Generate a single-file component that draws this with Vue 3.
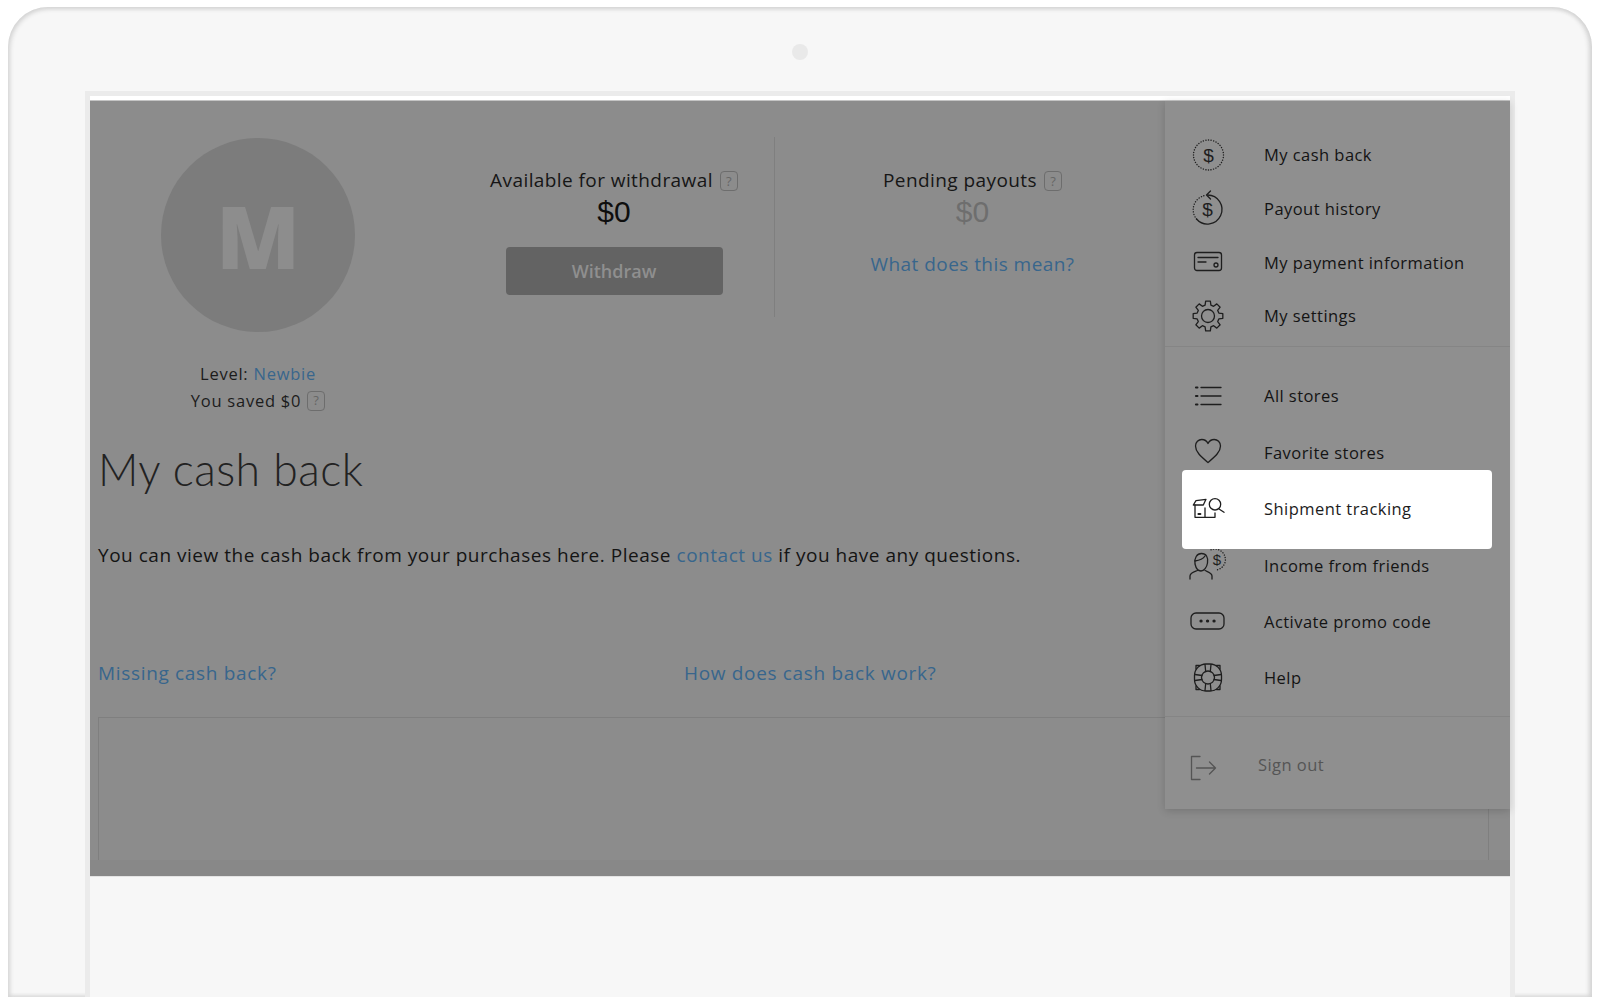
<script setup>
const stats = [
  { label: 'Available for withdrawal', value: '$0', muted: false },
  { label: 'Pending payouts', value: '$0', muted: true },
]
const topItems = [
  { id: 'cash', text: 'My cash back' },
  { id: 'history', text: 'Payout history' },
  { id: 'card', text: 'My payment information' },
  { id: 'gear', text: 'My settings' },
]
const midItems = [
  { id: 'list', text: 'All stores' },
  { id: 'heart', text: 'Favorite stores' },
  { id: 'ship', text: 'Shipment tracking', active: true },
  { id: 'friends', text: 'Income from friends' },
  { id: 'promo', text: 'Activate promo code' },
  { id: 'help', text: 'Help' },
]
function gearPath() {
  const pt = (r, deg) => {
    const a = (deg * Math.PI) / 180
    return `${(16 + r * Math.cos(a)).toFixed(2)} ${(16 + r * Math.sin(a)).toFixed(2)}`
  }
  let d = ''
  for (let i = 0; i < 8; i++) {
    const c = i * 45 - 90
    d += `${i ? 'L' : 'M'}${pt(11.2, c - 15)} L${pt(15, c - 9)} L${pt(15, c + 9)} L${pt(11.2, c + 15)} `
  }
  return d + 'Z'
}
const gear = gearPath()
</script>

<template>
  <div class="page">
    <div class="laptop">
      <div class="camera"></div>
      <div class="frame">
        <div class="strip"></div>
        <div class="app">
          <div class="content">
            <div class="head">
              <div class="profile">
                <div class="avatar">M</div>
                <div class="level">Level: <a>Newbie</a></div>
                <div class="saved">You saved $0 <span class="q">?</span></div>
              </div>
              <div class="stats">
                <div class="stat left">
                  <div class="label">{{ stats[0].label }} <span class="q">?</span></div>
                  <div class="value">{{ stats[0].value }}</div>
                  <button class="btn">Withdraw</button>
                </div>
                <div class="stat right">
                  <div class="label">{{ stats[1].label }} <span class="q">?</span></div>
                  <div class="value muted">{{ stats[1].value }}</div>
                  <a class="mean">What does this mean?</a>
                </div>
              </div>
            </div>
            <h1>My cash back</h1>
            <p class="intro">You can view the cash back from your purchases here. Please <a>contact us</a> if you have any questions.</p>
            <div class="links">
              <a>Missing cash back?</a>
              <a>How does cash back work?</a>
            </div>
            <div class="table"></div>
          </div>

          <aside class="menu">
            <div class="group first">
              <div v-for="item in topItems" :key="item.id" class="row small">
                <svg class="icon" viewBox="0 0 32 32">
                  <template v-if="item.id === 'cash'">
                    <circle class="dotted" cx="16.500" cy="16" r="15" />
                    <text x="16.500" y="22.500" class="dollar" font-size="19">$</text>
                  </template>
                  <template v-else-if="item.id === 'history'">
                    <path d="M15.500 2a14.500 14.500 0 1 1-11 24" />
                    <path class="dotted" d="M4.500 26A14.500 14.500 0 0 1 12.500 2.600" />
                    <path d="M18.500 -2l-4 4 4 4" />
                    <text x="15.500" y="22.500" class="dollar" font-size="19">$</text>
                  </template>
                  <template v-else-if="item.id === 'card'">
                    <rect x="2.500" y="6.500" width="27" height="18" rx="2.500" />
                    <path d="M6 11.500h20M6 16h8" />
                    <circle cx="24" cy="19" r="2" />
                  </template>
                  <template v-else>
                    <circle cx="16" cy="16" r="6.500" />
                    <path :d="gear" />
                  </template>
                </svg>
                <span>{{ item.text }}</span>
              </div>
            </div>
            <div class="group mid">
              <div v-for="item in midItems" :key="item.id" class="row" :class="{ active: item.active }">
                <svg class="icon" viewBox="0 0 32 32">
                  <template v-if="item.id === 'list'">
                    <path d="M9 7.500h20M9 16h20M9 24.500h20" />
                    <path class="thick" d="M4 7.500h1.400M4 16h1.400M4 24.500h1.400" />
                  </template>
                  <path v-else-if="item.id === 'heart'" d="M16 26.500C9 20.500 3.500 16 3.500 10 3.500 6 6.500 3.500 9.800 3.500 12.500 3.500 14.800 5 16 7.500c1.200-2.500 3.500-4 6.200-4 3.300 0 6.300 2.500 6.300 6.500C28.500 16 23 20.500 16 26.500Z" />
                  <template v-else-if="item.id === 'ship'">
                    <path d="M1.300 12 4 7.700 14 6.300 11.300 12Z" />
                    <path d="M3 12V24.300H23V20M13 15V24.300" />
                    <path d="M6.500 21h1.800" class="thick" />
                    <circle cx="23" cy="11.300" r="5.700" />
                    <path d="M27 16l5 3.300" />
                  </template>
                  <template v-else-if="item.id === 'friends'">
                    <path d="M3 15c-1-6 2-10.500 6.500-10.500 4.500 0 7 3.500 6 9.500-.7 4.500-3.500 8-6.500 8-3 0-5.200-3.500-6-7Z" />
                    <path d="M3 12c4-.5 8-2 10-5M-2 30v-3c0-3 4-4 7.500-5.500M20 30v-3c0-3-4-4-7-5.500" />
                    <path class="dotted" d="M19 .800A10.500 10.500 0 1 1 24 21" />
                    <text x="25" y="16" class="dollar" font-size="15">$</text>
                  </template>
                  <template v-else-if="item.id === 'promo'">
                    <rect x="-1" y="7" width="33" height="16" rx="5" />
                    <path class="dots" d="M9 15h.1M15.500 15h.1M22 15h.1" />
                  </template>
                  <template v-else>
                    <circle cx="16" cy="15.500" r="6.500" />
                    <rect x="2.500" y="2" width="27" height="27" rx="11.500" />
                    <path d="M13 2.500 13.700 9.500M19 2.500 18.300 9.500M13 28.500 13.700 21.500M19 28.500 18.300 21.500M3 12.500 10 13.500M3 18.500 10 17.500M29 12.500 22 13.500M29 18.500 22 17.500" />
                    <path d="M4 7v-3.500h3.500M28 7v-3.500h-3.500M4 24v3.500h3.500M28 24v3.500h-3.500" />
                  </template>
                </svg>
                <span>{{ item.text }}</span>
              </div>
            </div>
            <div class="signout">
              <svg class="icon" viewBox="0 0 32 32">
                <path d="M11 4.500H2.500V27.500H11" />
                <path d="M7.500 16H26M20.500 10l6 6-6 6" />
              </svg>
              <span>Sign out</span>
            </div>
          </aside>
        </div>
      </div>
    </div>
  </div>
</template>

<style>
html, body { margin: 0; background: #fff; }
</style>

<style scoped>
.page {
  width: 1600px;
  height: 1000px;
  box-sizing: border-box;
  padding: 7px 8px 0;
  overflow: hidden;
  background: #fff;
  font-family: "Open Sans", "Liberation Sans", sans-serif;
}
.laptop {
  height: 990px;
  box-sizing: border-box;
  padding: 37px 77px 0;
  background: #f7f7f7;
  border-radius: 40px 40px 0 0;
  box-shadow: inset 2px 2px 4px #d4d4d4, inset -3px 0 4px #d4d4d4, inset 0 -3px 3px #ececec;
  display: flex;
  flex-direction: column;
  align-items: center;
}
.camera {
  width: 16px;
  height: 16px;
  border-radius: 50%;
  background: #e9e9e9;
  margin-bottom: 31px;
  flex: none;
}
.frame {
  width: 1430px;
  height: 906px;
  box-sizing: border-box;
  border: 5px solid #ebebeb;
  border-bottom: 0;
  background: #f7f7f7;
  flex: none;
}
.strip {
  height: 5px;
  background: #fff;
}
.app {
  position: relative;
  height: 775px;
  background: #8c8c8c;
  box-shadow: 0 -1px 0 #c4c4c4, 0 1px 0 #e4e4e4;
  color: #141414;
}
a { color: #38668c; }
.content {
  padding: 0 21px 0 8px;
  height: 100%;
  box-sizing: border-box;
  overflow: hidden;
  position: relative;
}
.content::after {
  content: "";
  position: absolute;
  left: 0;
  right: 0;
  bottom: 0;
  height: 16px;
  background: #888;
}
.head {
  display: flex;
  height: 316px;
}
.profile {
  width: 320px;
  flex: none;
  display: flex;
  flex-direction: column;
  align-items: center;
  padding-top: 37px;
  font-size: 16.500px;
  letter-spacing: .75px;
  color: #1c1c1c;
}
.avatar {
  width: 194px;
  height: 194px;
  border-radius: 50%;
  background: #7c7c7c;
  color: #8d8d8d;
  font: 800 87px/194px "Open Sans", sans-serif;
  letter-spacing: 0;
  text-align: center;
  margin-bottom: 28px;
}
.level { line-height: 27px; }
.saved { line-height: 27px; display: flex; align-items: center; gap: 5px; }
.q {
  display: inline-flex;
  align-items: center;
  justify-content: center;
  width: 18px;
  height: 20px;
  box-sizing: border-box;
  border: 1.500px solid #6d6d6d;
  border-radius: 4px;
  color: #666;
  font-size: 13px;
  line-height: 1;
  letter-spacing: 0;
  margin-left: 1px;
}
.stats {
  display: flex;
  margin-top: 36px;
  height: 180px;
}
.stat {
  display: flex;
  flex-direction: column;
  align-items: center;
  box-sizing: border-box;
  padding-top: 30px;
}
.stat.left { width: 357px; border-right: 1px solid #7f7f7f; padding-left: 36px; }
.stat.right { width: 395px; }
.label { font-size: 19px; letter-spacing: .42px; line-height: 26px; color: #161616; white-space: nowrap; display: flex; align-items: center; gap: 6px; }
.label .q { margin-top: 2px; }
.value { font-size: 30px; line-height: 36px; color: #0e0e0e; margin-top: 1px; font-family: "Liberation Sans", sans-serif; }
.value.muted { color: #6e6e6e; }
.btn {
  margin-top: 17px;
  width: 217px;
  height: 48px;
  border: 0;
  border-radius: 4px;
  background: #636363;
  color: #8f8f8f;
  font: 600 18px "Open Sans", sans-serif;
}
.mean { margin-top: 21px; font-size: 19px; letter-spacing: .45px; line-height: 26px; }
h1 {
  margin: 0;
  font-family: Lato, sans-serif;
  font-weight: 300;
  font-size: 44.500px;
  line-height: 56px;
  color: #222;
  letter-spacing: .5px;
  margin-top: 24px;
}
.intro {
  margin: 45px 0 0;
  font-size: 19px;
  letter-spacing: .52px;
  line-height: 26px;
  white-space: nowrap;
}
.links {
  margin-top: 92px;
  display: flex;
  font-size: 19px;
  letter-spacing: .67px;
  line-height: 26px;
}
.links a:first-child { width: 586px; }
.table {
  margin-top: 31px;
  height: 160px;
  box-sizing: border-box;
  border: 1px solid #7f7f7f;
}
.menu {
  position: absolute;
  top: 0;
  right: 0;
  width: 345px;
  height: 708px;
  box-sizing: border-box;
  background: #8f8f8f;
  box-shadow: 0 2px 8px rgba(0, 0, 0, .16);
  display: flex;
  flex-direction: column;
  font-size: 16.500px;
  letter-spacing: .45px;
  color: #141414;
}
.group { flex: none; }
.first { padding: 27px 0 3px; border-bottom: 1px solid #858585; }
.mid { padding: 21px 0 10px; border-bottom: 1px solid #858585; }
.row {
  display: flex;
  align-items: center;
  gap: 40px;
  height: 56.400px;
  padding-left: 27px;
}
.row.small { height: 53.700px; }
.row.active {
  position: relative;
  z-index: 1;
  height: 79px;
  box-sizing: border-box;
  margin: -10.300px 18px -12.300px 17px;
  padding: 0 0 2px 10px;
  background: #fff;
  border-radius: 4px;
  color: #1c1c1c;
}
.icon {
  width: 32px;
  height: 32px;
  flex: none;
  overflow: visible;
  fill: none;
  stroke: #1e1e1e;
  stroke-width: 1.300;
  stroke-linecap: round;
  stroke-linejoin: round;
}
.dotted { stroke-dasharray: .1 2.500; stroke-width: 1.400; }
.dollar {
  fill: #1e1e1e;
  stroke: none;
  text-anchor: middle;
  font-family: "Liberation Sans", sans-serif;
  letter-spacing: 0;
}
.thick { stroke-width: 2.200; }
.dots { stroke-width: 3.200; }
.signout {
  display: flex;
  align-items: center;
  gap: 37px;
  padding: 35px 0 0 24px;
  color: #555;
}
.signout span { margin-top: -7px; }
.signout .icon { stroke: #555; }
</style>
